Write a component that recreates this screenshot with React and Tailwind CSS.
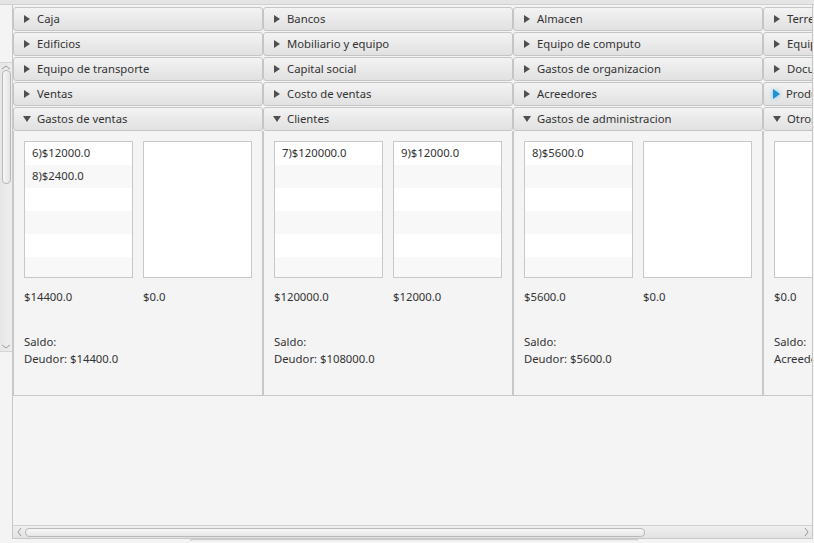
import React from "react";

const cols = [
  {
    rows: ["Caja", "Edificios", "Equipo de transporte", "Ventas"],
    title: "Gastos de ventas",
    debe: ["6)$12000.0", "8)$2400.0"],
    haber: [],
    td: "$14400.0",
    th: "$0.0",
    saldo: "Deudor: $14400.0",
  },
  {
    rows: ["Bancos", "Mobiliario y equipo", "Capital social", "Costo de ventas"],
    title: "Clientes",
    debe: ["7)$120000.0"],
    haber: ["9)$12000.0"],
    td: "$120000.0",
    th: "$12000.0",
    saldo: "Deudor: $108000.0",
  },
  {
    rows: ["Almacen", "Equipo de computo", "Gastos de organizacion", "Acreedores"],
    title: "Gastos de administracion",
    debe: ["8)$5600.0"],
    haber: [],
    td: "$5600.0",
    th: "$0.0",
    saldo: "Deudor: $5600.0",
  },
  {
    rows: ["Terrenos", "Equipo de reparto", "Documentos por cobrar", "Productos financieros"],
    title: "Otros gastos",
    debe: [],
    haber: [],
    td: "$0.0",
    th: "$0.0",
    saldo: "Acreedor: $0.0",
  },
];

function ArrowRight({ blue }) {
  if (blue) {
    return (
      <svg width="7" height="10" viewBox="0 0 7 10" className="drop-shadow-[0_0_2px_#6cc0ee]">
        <polygon points="0,0 7,5 0,10" fill="#1f8fd6" />
      </svg>
    );
  }
  return (
    <svg width="6" height="8" viewBox="0 0 6 8">
      <polygon points="0,0 6,4 0,8" fill="#4f4f4f" />
    </svg>
  );
}

function ArrowDown() {
  return (
    <svg width="8" height="6" viewBox="0 0 8 6">
      <polygon points="0,0 8,0 4,6" fill="#4f4f4f" />
    </svg>
  );
}

function Header({ text, expanded, blue }) {
  return (
    <div className="h-[24px] mb-[1px] flex items-center border border-[#c5c5c5] rounded-[3px] bg-gradient-to-b from-[#f3f3f3] to-[#e1e1e1] whitespace-nowrap overflow-hidden">
      {expanded ? (
        <span className="pl-[9px] flex items-center">
          <ArrowDown />
        </span>
      ) : (
        <span className={(blue ? "pl-[9px]" : "pl-[10px]") + " flex items-center"}>
          <ArrowRight blue={blue} />
        </span>
      )}
      <span className={expanded ? "ml-[6px]" : blue ? "ml-[6px]" : "ml-[7px]"}>{text}</span>
    </div>
  );
}

function List({ items }) {
  const rows = [0, 1, 2, 3, 4, 5];
  return (
    <div className="w-[109px] h-[137px] border border-[#c8c8c8] bg-white overflow-hidden shrink-0">
      {items.length > 0 &&
        rows.map((i) => (
          <div
            key={i}
            className={
              "h-[23px] pl-[7px] flex items-center whitespace-nowrap " +
              (i % 2 === 0 ? "bg-white" : "bg-[#f8f8f8]")
            }
          >
            {items[i] || ""}
          </div>
        ))}
    </div>
  );
}

function Column({ c, idx }) {
  return (
    <div className="w-[250px] shrink-0 flex flex-col">
      {c.rows.map((r, i) => (
        <Header key={r} text={r} blue={idx === 3 && i === 3} />
      ))}
      <Header text={c.title} expanded />
      <div className="h-[265px] border-x border-b border-[#c8c8c8] px-[10px] pt-[10px] mt-[-1px] flex flex-col">
        <div className="flex gap-[10px]">
          <List items={c.debe} />
          <List items={c.haber} />
        </div>
        <div className="flex gap-[10px] mt-[10px] leading-[17px]">
          <div className="w-[109px] shrink-0">{c.td}</div>
          <div className="w-[109px] shrink-0">{c.th}</div>
        </div>
        <div className="mt-[28px] leading-[17px] whitespace-nowrap">
          <div>Saldo:</div>
          <div>{c.saldo}</div>
        </div>
      </div>
    </div>
  );
}

function Chevron({ dir }) {
  const pts = {
    left: "4,0 1,4 4,8",
    right: "1,0 4,4 1,8",
    up: "0,4 4,1 8,4",
    down: "0,1 4,4 8,1",
  }[dir];
  const vertical = dir === "up" || dir === "down";
  return (
    <svg width={vertical ? 8 : 5} height={vertical ? 5 : 8} viewBox={vertical ? "0 0 8 5" : "0 0 5 8"}>
      <polyline points={pts} fill="none" stroke="#9a9a9a" strokeWidth="1" />
    </svg>
  );
}

export default function App() {
  return (
    <div className="w-[814px] h-[543px] bg-[#f4f4f4] overflow-hidden flex flex-col text-[11.3px] text-[#333333] font-['Noto_Sans',sans-serif]">
      <div className="h-[5px] shrink-0 bg-[#e4e4e4] border-b border-[#d0d0d0]" />
      <div className="flex h-[538px]">
        <div className="w-[12px] shrink-0 flex flex-col">
          <div className="h-[57px] shrink-0" />
          <div className="h-[290px] shrink-0 bg-gradient-to-r from-[#e6e6e6] to-[#eeeeee] border-y border-[#d4d4d4] flex flex-col items-center">
            <div className="h-[6px] flex items-center mt-[1px]">
              <Chevron dir="up" />
            </div>
            <div className="w-[9px] h-[114px] rounded-[4px] border border-[#b9b9b9] bg-gradient-to-r from-[#f6f6f6] to-[#e4e4e4]" />
            <div className="flex-1" />
            <div className="h-[8px] flex items-center mb-[1px]">
              <Chevron dir="down" />
            </div>
          </div>
        </div>
        <div className="flex flex-col w-[801px] h-[536px] shrink-0">
          <div className="flex flex-col h-[536px] border-l border-r border-b border-[#c8c8c8]">
            <div className="flex-1 overflow-hidden pt-[2px]">
              <div className="flex">
                {cols.map((c, i) => (
                  <Column key={i} c={c} idx={i} />
                ))}
              </div>
            </div>
            <div className="h-[13px] shrink-0 border-t border-[#d2d2d2] bg-gradient-to-b from-[#efefef] to-[#e3e3e3] flex items-center">
              <div className="w-[12px] flex justify-center">
                <Chevron dir="left" />
              </div>
              <div className="w-[620px] h-[9px] rounded-[4px] border border-[#b9b9b9] bg-gradient-to-b from-[#f7f7f7] to-[#e6e6e6]" />
              <div className="flex-1" />
              <div className="w-[12px] flex justify-center">
                <Chevron dir="right" />
              </div>
            </div>
          </div>
          <div className="h-[2px] ml-[178px] w-[448px] border-t border-x border-[#cfcfcf] bg-[#ececec]" />
        </div>
      </div>
    </div>
  );
}
